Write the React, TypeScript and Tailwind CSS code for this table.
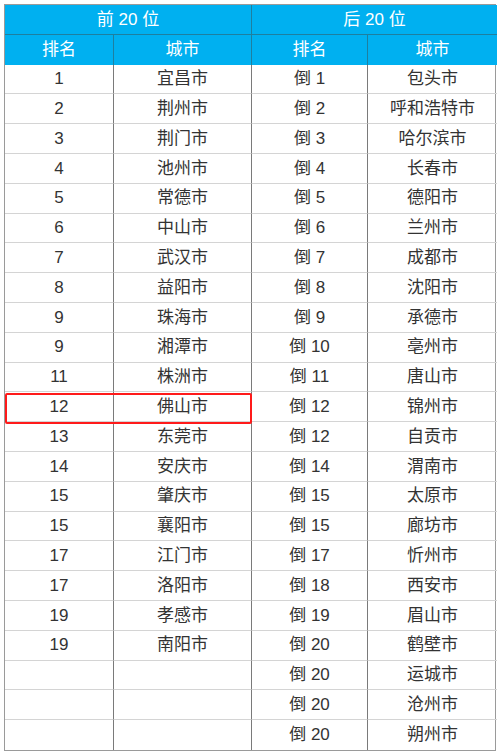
import React from "react";

const left: [string, string][] = [
  ["1", "宜昌市"],
  ["2", "荆州市"],
  ["3", "荆门市"],
  ["4", "池州市"],
  ["5", "常德市"],
  ["6", "中山市"],
  ["7", "武汉市"],
  ["8", "益阳市"],
  ["9", "珠海市"],
  ["9", "湘潭市"],
  ["11", "株洲市"],
  ["12", "佛山市"],
  ["13", "东莞市"],
  ["14", "安庆市"],
  ["15", "肇庆市"],
  ["15", "襄阳市"],
  ["17", "江门市"],
  ["17", "洛阳市"],
  ["19", "孝感市"],
  ["19", "南阳市"],
  ["", ""],
  ["", ""],
  ["", ""],
];

const right: [string, string][] = [
  ["倒 1", "包头市"],
  ["倒 2", "呼和浩特市"],
  ["倒 3", "哈尔滨市"],
  ["倒 4", "长春市"],
  ["倒 5", "德阳市"],
  ["倒 6", "兰州市"],
  ["倒 7", "成都市"],
  ["倒 8", "沈阳市"],
  ["倒 9", "承德市"],
  ["倒 10", "亳州市"],
  ["倒 11", "唐山市"],
  ["倒 12", "锦州市"],
  ["倒 12", "自贡市"],
  ["倒 14", "渭南市"],
  ["倒 15", "太原市"],
  ["倒 15", "廊坊市"],
  ["倒 17", "忻州市"],
  ["倒 18", "西安市"],
  ["倒 19", "眉山市"],
  ["倒 20", "鹤壁市"],
  ["倒 20", "运城市"],
  ["倒 20", "沧州市"],
  ["倒 20", "朔州市"],
];

const font = {
  fontFamily: '"Liberation Sans", "Noto Sans CJK SC", sans-serif',
};

export default function App() {
  return (
    <div className="w-[500px] h-[755px] bg-white pt-[4px] pl-[4px]" style={font}>
      <div className="relative w-[492px] h-[747px] border border-[#9a9a9a] grid grid-cols-[109px_138px_116px_129px] grid-rows-[repeat(25,1fr)] text-[17px] text-[#333333]">
        <div className="col-span-2 bg-[#00b0f0] text-white flex items-center justify-center border-b border-r border-[#1e7f9f]">
          前 20 位
        </div>
        <div className="col-span-2 bg-[#00b0f0] text-white flex items-center justify-center border-b border-[#1e7f9f]">
          后 20 位
        </div>
        <div className="bg-[#00b0f0] text-white flex items-center justify-center border-r border-[#1e7f9f]">排名</div>
        <div className="bg-[#00b0f0] text-white flex items-center justify-center border-r border-[#1e7f9f]">城市</div>
        <div className="bg-[#00b0f0] text-white flex items-center justify-center border-r border-[#1e7f9f]">排名</div>
        <div className="bg-[#00b0f0] text-white flex items-center justify-center">城市</div>
        {left.map((l, i) => {
          const r = right[i];
          const last = i === left.length - 1;
          const b = last ? "" : "border-b border-[#d4d4d4]";
          return (
            <React.Fragment key={i}>
              <div className={`flex items-center justify-center border-r border-r-[#7a7a7a] ${b}`}>{l[0]}</div>
              <div className={`flex items-center justify-center border-r border-r-[#7a7a7a] ${b}`}>{l[1]}</div>
              <div className={`flex items-center justify-center border-r border-r-[#7a7a7a] ${b}`}>{r[0]}</div>
              <div className={`flex items-center justify-center ${b}`}>{r[1]}</div>
            </React.Fragment>
          );
        })}
        <div className="absolute left-[0px] top-[388px] w-[247px] h-[31px] border-2 border-[#ff1a1a] rounded-[2px] pointer-events-none" />
      </div>
    </div>
  );
}
